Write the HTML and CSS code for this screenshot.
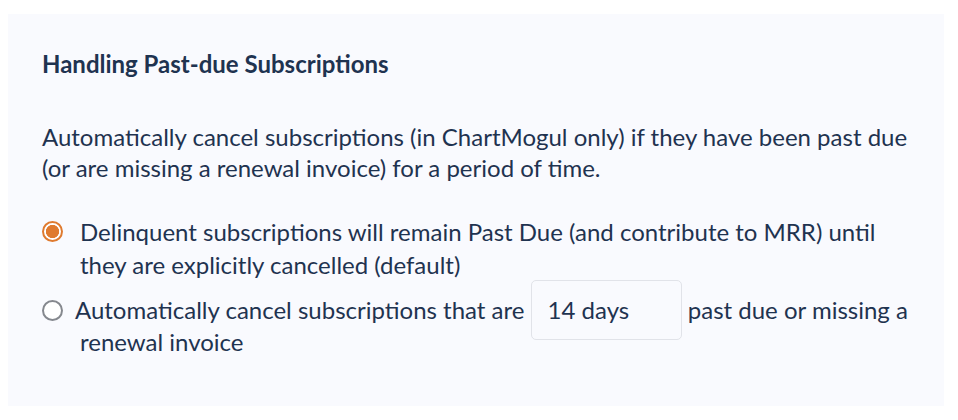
FILE: index.html
```html
<!DOCTYPE html>
<html lang="en">
<head>
<meta charset="utf-8">
<title>Handling Past-due Subscriptions</title>
<link rel="stylesheet" href="styles.css">
</head>
<body>
<section class="panel">
  <h2 class="panel-title">Handling Past-due Subscriptions</h2>
  <p class="panel-text">Automatically cancel subscriptions (in ChartMogul only) if they have been past due (or are missing a renewal invoice) for a period of time.</p>
  <div class="options">
    <label class="option">
      <span class="radio radio-checked"></span>
      <span class="option-label">Delinquent subscriptions will remain Past Due (and contribute to MRR) until they are explicitly cancelled (default)</span>
    </label>
    <label class="option option-second">
      <span class="radio"></span>
      <span class="option-label">Automatically cancel subscriptions that are <span class="days-input">14 days</span> past due or missing a renewal invoice</span>
    </label>
  </div>
</section>
</body>
</html>
```

FILE: styles.css
```css
html, body {
  margin: 0;
  padding: 0;
  background: #ffffff;
}

body {
  font-family: "Lato", "Liberation Sans", sans-serif;
  color: #1f3350;
}

.panel {
  box-sizing: border-box;
  width: 936px;
  height: 392px;
  margin: 14px 0 0 8px;
  padding: 35px 0 0 34px;
  background: #f9fafe;
}

.panel-title {
  margin: 0;
  font-size: 24px;
  font-weight: 700;
  line-height: 30px;
}

.panel-text {
  width: 882px;
  margin: 42px 0 0;
  font-size: 24px;
  line-height: 31px;
}

.options {
  width: 874px;
  margin-top: 32px;
  display: flex;
  flex-direction: column;
  gap: 13px;
}

.option {
  display: flex;
  align-items: flex-start;
  font-size: 24px;
  line-height: 33px;
}

.option-second {
  line-height: 32px;
}

.radio {
  flex: none;
  box-sizing: border-box;
  width: 21px;
  height: 21px;
  margin-top: 6px;
  border-radius: 50%;
  border: 2px solid #85888e;
  background: #ffffff;
}

.radio-checked {
  border-color: #df7a2f;
  background: radial-gradient(circle, #df7a2f 0 6.3px, #ffffff 6.9px);
}

.option-label {
  margin-left: 17px;
}

.option-second .option-label {
  text-indent: -5px;
}

.days-input {
  display: inline-block;
  box-sizing: border-box;
  width: 151px;
  height: 60px;
  margin: -14px 0;
  padding: 14px 16px;
  line-height: 30px;
  text-indent: 0;
  vertical-align: baseline;
  border: 1px solid #e1e3e9;
  border-radius: 5px;
  background: #f9fafe;
}
```
